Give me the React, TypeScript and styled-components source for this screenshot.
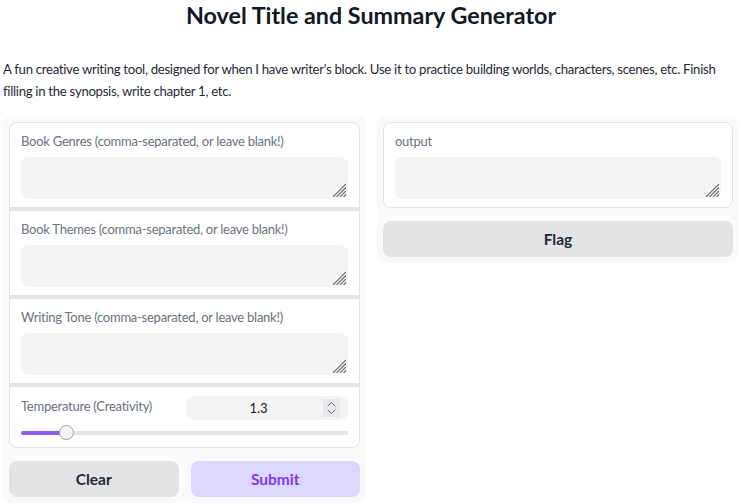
import React from "react";
import styled, { createGlobalStyle } from "styled-components";

const Global = createGlobalStyle`
  html, body { margin: 0; padding: 0; background: #ffffff; }
  body { font-family: "Lato", "Noto Sans", sans-serif; color: #1f2937; }
  * { box-sizing: border-box; }
`;

const Page = styled.div`
  padding: 0 0 0 3px;
  width: 739px;
`;

const Title = styled.h1`
  margin: 0;
  padding-top: 2px;
  height: 30px;
  text-align: center;
  font-size: 23.3px;
  line-height: 26px;
  font-weight: 700;
  color: #111827;
`;

const Description = styled.p`
  margin: 28px 0 0;
  font-size: 13.2px;
  letter-spacing: -0.3px;
  line-height: 22px;
  color: #1f2937;
`;

const Columns = styled.div`
  display: grid;
  grid-template-columns: 363px 362px;
  column-gap: 11px;
  align-items: start;
  margin-top: 14px;
`;

const Panel = styled.div`
  display: flex;
  flex-direction: column;
  gap: 13px;
  padding: 6px;
  background: #fafafa;
  border-radius: 8px;
`;

const Form = styled.div`
  display: flex;
  flex-direction: column;
  gap: 4px;
  background: #e4e4e7;
  border: 1px solid #e4e4e7;
  border-radius: 8px;
  overflow: hidden;
`;

const Field = styled.label`
  display: flex;
  flex-direction: column;
  gap: 8px;
  padding: 10px 11px 8px 11px;
  background: #ffffff;
`;

const Label = styled.span<{ $offset?: number }>`
  font-size: 13px;
  letter-spacing: -0.25px;
  line-height: 16px;
  color: #6b7280;
  margin-top: ${(p) => p.$offset ?? 0}px;
`;

const TextAreaWrap = styled.div`
  position: relative;
`;

const TextArea = styled.textarea`
  display: block;
  width: 100%;
  height: 42px;
  padding: 8px 10px;
  border: none;
  border-radius: 8px;
  background: #f4f4f5;
  font-family: inherit;
  font-size: 14px;
  outline: none;
  resize: none;
`;

const Grip = styled.svg`
  position: absolute;
  right: 2px;
  bottom: 2px;
  pointer-events: none;
`;

const SliderField = styled.div`
  display: flex;
  flex-direction: column;
  gap: 5px;
  padding: 9px 11px 7px 11px;
  background: #ffffff;
`;

const SliderHeader = styled.div`
  display: flex;
  align-items: flex-start;
  justify-content: space-between;
  height: 24px;
`;

const NumberBox = styled.div`
  display: flex;
  align-items: center;
  width: 162px;
  height: 24px;
  padding: 0 8px;
  background: #f4f4f5;
  border-radius: 8px;
`;

const NumberValue = styled.span`
  flex: 1;
  text-align: center;
  font-size: 13px;
  color: #111827;
`;

const Spinner = styled.span`
  display: flex;
  align-items: center;
  justify-content: center;
  width: 17px;
  height: 18px;
  background: #e9e9ec;
`;

const Track = styled.div`
  position: relative;
  height: 15px;
  display: flex;
  align-items: center;
`;

const Rail = styled.div`
  width: 100%;
  height: 4px;
  border-radius: 2px;
  background: #e4e4e7;
  overflow: hidden;
`;

const Fill = styled.div`
  height: 100%;
  background: #8b5cf6;
`;

const Thumb = styled.div`
  position: absolute;
  top: 0;
  width: 15px;
  height: 15px;
  margin-left: -7.5px;
  border-radius: 50%;
  background: #f4f4f5;
  border: 1px solid #9ca3af;
`;

const ButtonRow = styled.div`
  display: grid;
  grid-template-columns: 1fr 1fr;
  gap: 12px;
`;

const Button = styled.button<{ $variant: "primary" | "secondary" }>`
  height: 36px;
  border: none;
  border-radius: 8px;
  font-family: inherit;
  font-size: 15.5px;
  font-weight: 700;
  cursor: pointer;
  background: ${(p) => (p.$variant === "primary" ? "#ddd6fe" : "#e4e4e7")};
  color: ${(p) => (p.$variant === "primary" ? "#7c3aed" : "#1f2937")};
`;

const GripIcon = () => (
  <Grip width="14" height="14" viewBox="0 0 14 14" stroke="#6b6b6b" strokeWidth="1.1">
    <line x1="1" y1="14" x2="14" y2="1" />
    <line x1="4.5" y1="14" x2="14" y2="4.5" />
    <line x1="8" y1="14" x2="14" y2="8" />
    <line x1="11.5" y1="14" x2="14" y2="11.5" />
  </Grip>
);

const TextField = ({ label }: { label: string }) => (
  <Field>
    <Label>{label}</Label>
    <TextAreaWrap>
      <TextArea />
      <GripIcon />
    </TextAreaWrap>
  </Field>
);

const SpinIcon = () => (
  <svg width="9" height="14" viewBox="0 0 9 14" fill="none" stroke="#6b7280" strokeWidth="1" strokeLinecap="round">
    <path d="M1 5 L4.5 1.5 L8 5" />
    <path d="M1 9 L4.5 12.5 L8 9" />
  </svg>
);

export default function App() {
  const value = 1.3;
  const min = 0;
  const max = 10;
  const pct = ((value - min) / (max - min)) * 100 + 0.9;
  return (
    <>
      <Global />
      <Page>
        <Title>Novel Title and Summary Generator</Title>
        <Description>
          A fun creative writing tool, designed for when I have writer's block. Use it to practice building worlds,
          characters, scenes, etc. Finish filling in the synopsis, write chapter 1, etc.
        </Description>
        <Columns>
          <Panel>
            <Form>
              <TextField label="Book Genres (comma-separated, or leave blank!)" />
              <TextField label="Book Themes (comma-separated, or leave blank!)" />
              <TextField label="Writing Tone (comma-separated, or leave blank!)" />
              <SliderField>
                <SliderHeader>
                  <Label $offset={2}>Temperature (Creativity)</Label>
                  <NumberBox>
                    <NumberValue>{value}</NumberValue>
                    <Spinner>
                      <SpinIcon />
                    </Spinner>
                  </NumberBox>
                </SliderHeader>
                <Track>
                  <Rail>
                    <Fill style={{ width: `${pct}%` }} />
                  </Rail>
                  <Thumb style={{ left: `${pct}%` }} />
                </Track>
              </SliderField>
            </Form>
            <ButtonRow>
              <Button $variant="secondary">Clear</Button>
              <Button $variant="primary">Submit</Button>
            </ButtonRow>
          </Panel>
          <Panel>
            <Form>
              <TextField label="output" />
            </Form>
            <Button $variant="secondary">Flag</Button>
          </Panel>
        </Columns>
      </Page>
    </>
  );
}
